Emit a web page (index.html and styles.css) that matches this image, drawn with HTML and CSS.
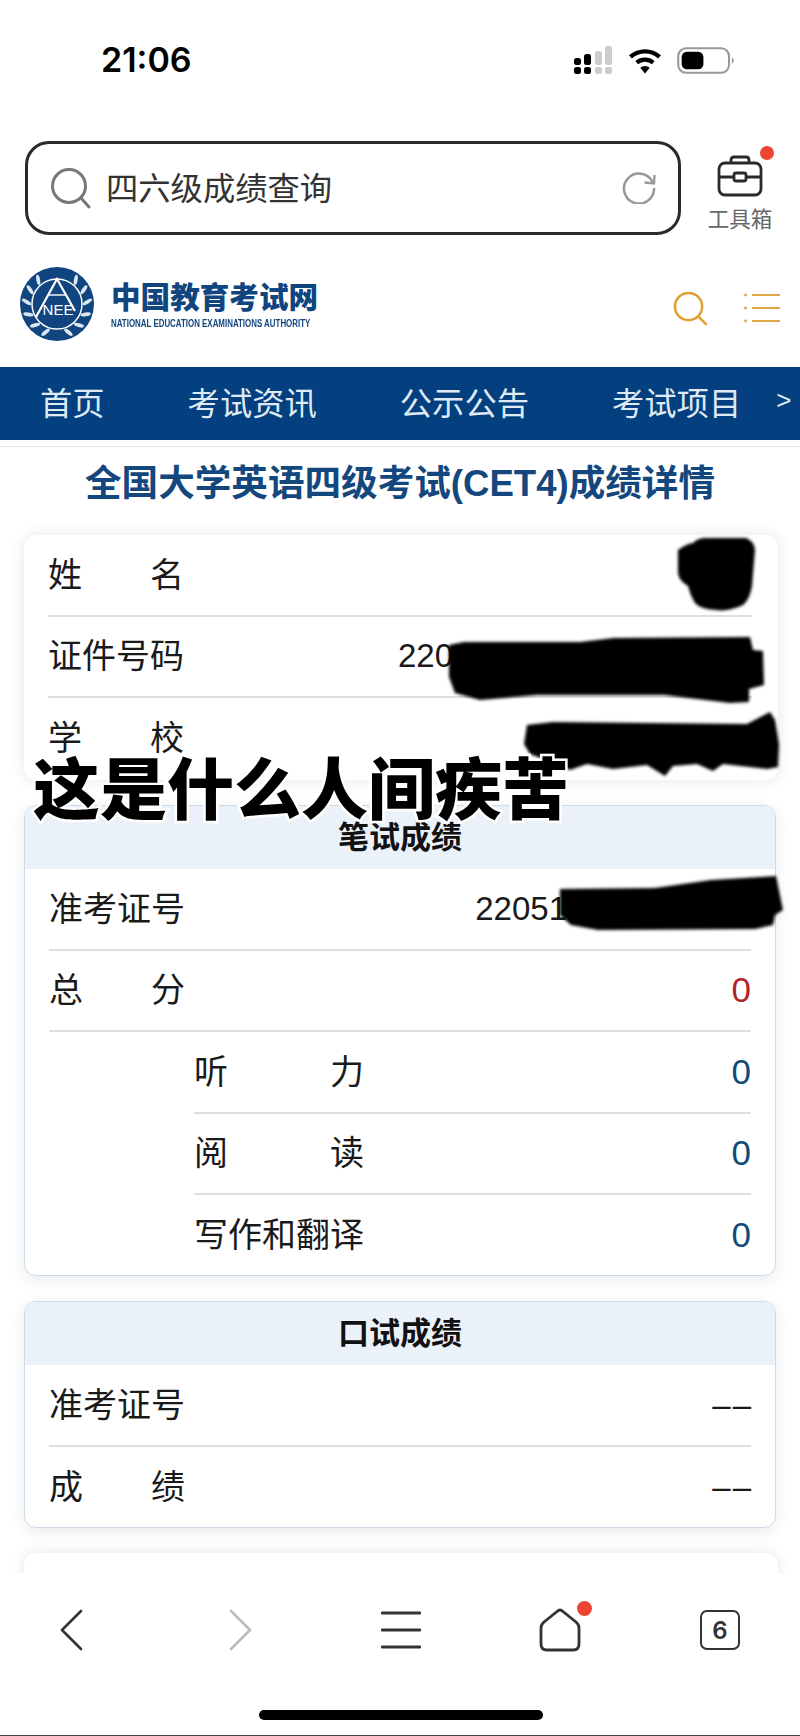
FILE: index.html
```html
<!DOCTYPE html>
<html lang="zh-CN">

<head>
    <meta charset="UTF-8">
    <meta name="viewport" content="width=device-width, initial-scale=1.0">
    <title>成绩详情</title>
    <link rel="stylesheet" href="styles.css">
</head>

<body>
    <div class="phone">
        <div class="status-bar">
            <div class="status-time">21:06</div>
            <div class="status-icons">
                <svg class="icon-signal" viewBox="0 0 40 28">
                    <rect x="1" y="12" width="7" height="7" rx="2.5" />
                    <rect x="1" y="21" width="7" height="7" rx="2.5" />
                    <rect x="11" y="8" width="7" height="11" rx="2.5" />
                    <rect x="11" y="21" width="7" height="7" rx="2.5" />
                    <rect class="off" x="22" y="5" width="7" height="14" rx="2.5" />
                    <rect class="off" x="22" y="21" width="7" height="7" rx="2.5" />
                    <rect class="off" x="32" y="0" width="7" height="19" rx="2.5" />
                    <rect class="off" x="32" y="21" width="7" height="7" rx="2.5" />
                </svg>
                <svg class="icon-wifi" viewBox="0 0 32 26">
                    <path d="M2 9.5 A21 21 0 0 1 30 9.5" fill="none" stroke="#000" stroke-width="4.2" />
                    <path d="M8 15 A12.5 12.5 0 0 1 24 15" fill="none" stroke="#000" stroke-width="4" />
                    <path d="M11.5 20 L16 25.5 L20.5 20 A7 7 0 0 0 11.5 20 Z" fill="#000" />
                </svg>
                <svg class="icon-battery" viewBox="0 0 56 26">
                    <rect x="1.2" y="1.2" width="49" height="23.6" rx="7.5" fill="none" stroke="#999" stroke-width="2" />
                    <rect x="4.5" y="4.5" width="21" height="17" rx="5" fill="#000" />
                    <path d="M53 10 C55 11 55.5 15 53 16 Z" fill="#999" />
                </svg>
            </div>
        </div>

        <div class="search-row">
            <div class="search-box">
                <svg class="icon-search" viewBox="0 0 42 42">
                    <circle cx="19" cy="19" r="16.5" fill="none" stroke="#777" stroke-width="3" />
                    <path d="M31 31 L39 40" stroke="#777" stroke-width="3" stroke-linecap="round" />
                </svg>
                <span class="search-text">四六级成绩查询</span>
                <svg class="icon-refresh" viewBox="0 0 34 34">
                    <path d="M30.5 12 A15 15 0 1 0 32 18" fill="none" stroke="#999" stroke-width="2.6" />
                    <path d="M22.5 12.5 L32 13.5 L32.5 5" fill="none" stroke="#999" stroke-width="2.4" />
                </svg>
            </div>
            <div class="toolbox">
                <span class="toolbox-dot"></span>
                <svg class="icon-toolbox" viewBox="0 0 46 42">
                    <rect x="2" y="8" width="42" height="32" rx="6" fill="none" stroke="#2a2a2a" stroke-width="2.8" />
                    <path d="M14 8 V5 Q14 2 17 2 H29 Q32 2 32 5 V8" fill="none" stroke="#2a2a2a" stroke-width="2.8" />
                    <path d="M2 22 H17 M29 22 H44" stroke="#2a2a2a" stroke-width="2.8" />
                    <rect x="17" y="18" width="12" height="8" rx="2" fill="none" stroke="#2a2a2a" stroke-width="2.8" />
                </svg>
                <span class="toolbox-label">工具箱</span>
            </div>
        </div>

        <div class="site-header">
            <svg class="site-logo" viewBox="0 0 74 74">
                <defs>
                    <ellipse id="leaf" cx="37" cy="6.5" rx="1.9" ry="5.2" fill="#dbe6f0" />
                </defs>
                <circle cx="37" cy="37" r="37" fill="#11457f" />
                <circle cx="37" cy="37" r="25" fill="none" stroke="#fff" stroke-width="1.5" />
                <!-- wreath: leaves lean in towards the top on both sides -->
                <use href="#leaf" transform="rotate(38 37 37) rotate(-28 37 6.5)" />
                <use href="#leaf" transform="rotate(62 37 37) rotate(-28 37 6.5)" />
                <use href="#leaf" transform="rotate(86 37 37) rotate(-28 37 6.5)" />
                <use href="#leaf" transform="rotate(110 37 37) rotate(-28 37 6.5)" />
                <use href="#leaf" transform="rotate(134 37 37) rotate(-28 37 6.5)" />
                <use href="#leaf" transform="rotate(158 37 37) rotate(-28 37 6.5)" />
                <use href="#leaf" transform="rotate(-38 37 37) rotate(28 37 6.5)" />
                <use href="#leaf" transform="rotate(-62 37 37) rotate(28 37 6.5)" />
                <use href="#leaf" transform="rotate(-86 37 37) rotate(28 37 6.5)" />
                <use href="#leaf" transform="rotate(-110 37 37) rotate(28 37 6.5)" />
                <use href="#leaf" transform="rotate(-134 37 37) rotate(28 37 6.5)" />
                <use href="#leaf" transform="rotate(-158 37 37) rotate(28 37 6.5)" />
                <path d="M16 50 L37 12 L55 44" fill="none" stroke="#fff" stroke-width="2.2" />
                <path d="M29 28 H45" stroke="#fff" stroke-width="1.4" />
                <text class="logo-letters" x="38" y="48" text-anchor="middle">NEE</text>
            </svg>
            <div class="site-name">
                <div class="site-name-cn">中国教育考试网</div>
                <div class="site-name-en">NATIONAL EDUCATION EXAMINATIONS AUTHORITY</div>
            </div>
            <svg class="icon-find" viewBox="0 0 36 36">
                <circle cx="16" cy="16" r="14" fill="none" stroke="#e0a030" stroke-width="2.6" />
                <path d="M26 26 L34 34" stroke="#e0a030" stroke-width="2.6" stroke-linecap="round" />
            </svg>
            <svg class="icon-list" viewBox="0 0 36 30">
                <path d="M8 2 H36 M8 15 H36 M8 28 H36" stroke="#e0a84a" stroke-width="2.2" />
                <circle cx="1.5" cy="2" r="1.4" fill="#e0a84a" />
                <circle cx="1.5" cy="15" r="1.4" fill="#e0a84a" />
                <circle cx="1.5" cy="28" r="1.4" fill="#e0a84a" />
            </svg>
        </div>

        <nav class="main-nav">
            <span>首页</span>
            <span class="nav-link">考试资讯</span>
            <span class="nav-link">公示公告</span>
            <span class="nav-link">考试项目</span>
            <span class="nav-more">&gt;</span>
        </nav>
        <div class="nav-shade"></div>

        <main class="content">
            <h1 class="page-title">全国大学英语四级考试(CET4)成绩详情</h1>

            <section class="card card-plain">
                <div class="row">
                    <span class="label">姓名</span>
                </div>
                <div class="row">
                    <span class="label">证件号码</span>
                    <span class="value value-id">220</span>
                </div>
                <div class="row">
                    <span class="label">学校</span>
                </div>
                <!-- inked over by hand -->
                <svg class="scribble scribble-name" viewBox="0 0 78 74">
                    <path d="M0 13 Q8 7 15 6 Q20 1 27 1 L68 1 Q76 4 77 13 L74 49 Q72 62 65 68 Q50 75 38 73 Q22 72 17 66 Q12 58 10 49 Q1 44 0 36 Z" />
                </svg>
                <svg class="scribble scribble-id" viewBox="0 0 318 67">
                    <path d="M2 8 L17 5 L133 5 L167 1 L303 0 L306 13 L316 14 L317 48 L302 52 L302 65 L283 66 L217 58 L90 58 L33 63 L8 56 L2 40 Z" />
                </svg>
                <svg class="scribble scribble-school" viewBox="0 0 256 65">
                    <path d="M3 13 L29 10 L223 12 L246 0 L251 8 L255 32 L254 55 L243 57 L199 52 L189 59 L173 52 L149 54 L141 64 L123 53 L89 57 L63 52 L46 58 L6 42 L0 32 Z" />
                </svg>
            </section>

            <section class="card card-score">
                <h2 class="card-head">笔试成绩</h2>
                <div class="row">
                    <span class="label">准考证号</span>
                    <span class="value value-ticket">22051</span>
                </div>
                <div class="row">
                    <span class="label">总分</span>
                    <span class="value value-total">0</span>
                </div>
                <div class="row row-sub">
                    <span class="label label-sub">听力</span>
                    <span class="value value-part">0</span>
                </div>
                <div class="row row-sub">
                    <span class="label label-sub">阅读</span>
                    <span class="value value-part">0</span>
                </div>
                <div class="row row-sub">
                    <span class="label label-sub">写作和翻译</span>
                    <span class="value value-part">0</span>
                </div>
                <svg class="scribble scribble-ticket" viewBox="0 0 226 55">
                    <path d="M2 13 L97 12 L153 4 L218 0 L225 34 L217 39 L215 49 L197 53 L40 54 L13 49 L2 39 Z" />
                </svg>
            </section>

            <section class="card card-score">
                <h2 class="card-head">口试成绩</h2>
                <div class="row">
                    <span class="label">准考证号</span>
                    <span class="value value-dash">––</span>
                </div>
                <div class="row">
                    <span class="label">成绩</span>
                    <span class="value value-dash">––</span>
                </div>
            </section>

            <section class="card card-plain"></section>

            <div class="caption">这是什么人间疾苦</div>
        </main>

        <div class="browser-bar">
            <div class="browser-icons">
                <svg class="icon-back" viewBox="0 0 24 42">
                    <path d="M22 2 L3 21 L22 40" fill="none" stroke="#333" stroke-width="2.6" stroke-linecap="round" stroke-linejoin="round" />
                </svg>
                <svg class="icon-forward" viewBox="0 0 24 42">
                    <path d="M2 2 L21 21 L2 40" fill="none" stroke="#bbb" stroke-width="2.6" stroke-linecap="round" stroke-linejoin="round" />
                </svg>
                <svg class="icon-menu" viewBox="0 0 40 38">
                    <path d="M1 2 H39 M1 19 H39 M1 36 H39" stroke="#333" stroke-width="2.8" stroke-linecap="round" />
                </svg>
                <div class="home-wrap">
                    <svg class="icon-home" viewBox="0 0 42 44">
                        <path d="M21 2 Q22.5 2 24 3.5 L37 14 Q40 16.5 40 20 V36 Q40 42 34 42 H8 Q2 42 2 36 V20 Q2 16.5 5 14 L18 3.5 Q19.5 2 21 2 Z" fill="none" stroke="#333" stroke-width="2.8" />
                    </svg>
                    <span class="home-dot"></span>
                </div>
                <div class="tab-count">6</div>
            </div>
            <div class="home-bar"></div>
        </div>
    </div>
</body>

</html>
```
FILE: styles.css
```css
* {
    box-sizing: border-box;
}

body {
    margin: 0;
    background-color: #fff;
    font-family: "Liberation Sans", "Noto Sans CJK SC", sans-serif;
    color: #1a1a1a;
}

.phone {
    width: 800px;
    height: 1736px;
    display: flex;
    flex-direction: column;
    overflow: hidden;
}

/* status bar */
.status-bar {
    height: 141px;
    flex-shrink: 0;
    display: flex;
    justify-content: space-between;
    align-items: flex-start;
    padding: 40px 65px 0 101px;
}

.status-time {
    font-family: Inter, sans-serif;
    font-size: 34px;
    font-weight: 600;
    line-height: 40px;
    color: #000;
}

.status-icons {
    display: flex;
    align-items: center;
    gap: 15px;
    padding-top: 6px;
}

.icon-signal {
    width: 40px;
    height: 28px;
    fill: #000;
}

.icon-signal .off {
    fill: #ccc;
}

.icon-wifi {
    width: 34px;
    height: 27px;
}

.icon-battery {
    width: 58px;
    height: 27px;
}

/* search row */
.search-row {
    height: 126px;
    flex-shrink: 0;
    display: flex;
    align-items: flex-start;
    padding-left: 25px;
}

.search-box {
    width: 656px;
    height: 94px;
    border: 3px solid #2a2a2a;
    border-radius: 24px;
    display: flex;
    align-items: center;
    padding: 0 22px;
}

.icon-search {
    width: 42px;
    height: 42px;
    margin-right: 14px;
    flex-shrink: 0;
}

.search-text {
    font-size: 32.3px;
    color: #333;
    flex: 1;
    padding-bottom: 4px;
}

.icon-refresh {
    width: 34px;
    height: 34px;
    margin-bottom: 2px;
}

.toolbox {
    position: relative;
    width: 66px;
    margin-left: 26px;
    padding-top: 14px;
    display: flex;
    flex-direction: column;
    align-items: center;
}

.toolbox-dot {
    position: absolute;
    top: 5px;
    right: -1px;
    width: 14px;
    height: 14px;
    border-radius: 50%;
    background-color: #ee4433;
}

.icon-toolbox {
    width: 46px;
    height: 42px;
}

.toolbox-label {
    font-size: 21.5px;
    line-height: 26px;
    margin-top: 10px;
    color: #666;
    white-space: nowrap;
}

/* site header */
.site-header {
    height: 100px;
    flex-shrink: 0;
    display: flex;
    align-items: flex-start;
    padding-left: 20px;
}

.site-logo {
    width: 74px;
    height: 74px;
    flex-shrink: 0;
}

.logo-letters {
    font-family: "Liberation Sans", sans-serif;
    font-size: 15px;
    fill: #fff;
}

.site-name {
    width: 210px;
    margin-left: 17px;
    padding-top: 14px;
    color: #11457f;
}

.site-name-cn {
    font-size: 29.6px;
    font-weight: 900;
    line-height: 34px;
    white-space: nowrap;
}

.site-name-en {
    font-size: 11px;
    font-weight: bold;
    line-height: 12px;
    margin-top: 2px;
    white-space: nowrap;
    transform: scaleX(0.72);
    transform-origin: left center;
}

.icon-find {
    width: 35px;
    height: 35px;
    margin-top: 24px;
    margin-left: 352px;
}

.icon-list {
    width: 36px;
    height: 30px;
    margin-top: 26px;
    margin-left: 36px;
}

/* main nav */
.main-nav {
    height: 73px;
    flex-shrink: 0;
    background-color: #04407f;
    color: #dfeaf4;
    display: flex;
    align-items: center;
    font-size: 32.3px;
    white-space: nowrap;
    padding: 0 0 6px 40px;
}

.nav-link {
    margin-left: 83px;
}

.nav-more {
    font-size: 26px;
    margin-left: 35px;
}

.nav-shade {
    height: 7px;
    flex-shrink: 0;
    border-bottom: 1px solid #e6eaee;
}

/* cards */
.content {
    position: relative;
    flex: 1;
    overflow: hidden;
    padding: 0 24px;
}

.page-title {
    margin: 0;
    height: 88px;
    padding-top: 12px;
    font-size: 36.6px;
    line-height: 50px;
    font-weight: bold;
    text-align: center;
    color: #13477d;
    white-space: nowrap;
}

.card {
    position: relative;
    border-radius: 12px;
    background-color: #fff;
}

.card-plain {
    width: 754px;
    height: 245px;
    margin-bottom: 25px;
    padding: 0 26px 0 24px;
    box-shadow: 0 0 14px rgba(60, 80, 110, 0.14);
}

.card-score {
    width: 752px;
    margin-bottom: 25px;
    border: 1.5px solid #cddae6;
    box-shadow: 0 4px 14px rgba(60, 80, 110, 0.12);
    padding: 0 24px;
}

.card-head {
    margin: 0 -24px;
    height: 63px;
    border-radius: 10px 10px 0 0;
    background-color: #ebf1f9;
    font-size: 31px;
    line-height: 63px;
    font-weight: bold;
    text-align: center;
    color: #111;
}

.row {
    height: 81.5px;
    display: flex;
    justify-content: space-between;
    align-items: center;
    border-bottom: 2px solid #dcdfe2;
    font-size: 34px;
}

.row:last-of-type {
    height: 80px;
    border-bottom: none;
}

.row-sub {
    margin-left: 145px;
}

.label {
    width: 4em;
    text-align-last: justify;
    line-height: 44px;
}

.label-sub {
    width: 5em;
}

.value {
    font-size: 33px;
    line-height: 44px;
    color: #1a1a1a;
}

/* the rest of these two numbers runs under the ink */
.value-id {
    margin-right: 299px;
}

.value-ticket {
    margin-right: 184px;
}

.value-total {
    font-size: 35px;
    color: #b5232b;
}

.value-part {
    font-size: 35px;
    color: #104a78;
}

.value-dash {
    letter-spacing: 2px;
    margin-right: -2px;
}

/* marker ink drawn on top of the rows */
.scribble {
    position: absolute;
    fill: #000;
    filter: blur(1.5px);
}

.scribble-name {
    top: 2px;
    left: 654px;
    width: 78px;
    height: 74px;
}

.scribble-id {
    top: 102px;
    left: 423px;
    width: 318px;
    height: 67px;
}

.scribble-school {
    top: 177px;
    left: 500px;
    width: 256px;
    height: 65px;
}

.scribble-ticket {
    top: 70px;
    left: 533px;
    width: 226px;
    height: 55px;
}

.caption {
    position: absolute;
    top: 304px;
    left: 33px;
    font-size: 67px;
    font-weight: 900;
    line-height: 80px;
    color: #000;
    white-space: nowrap;
    -webkit-text-stroke: 5px #fff;
    paint-order: stroke fill;
}

/* browser toolbar */
.browser-bar {
    height: 163px;
    flex-shrink: 0;
    background-color: #fff;
    border-bottom: 1px solid #444;
    position: relative;
}

.browser-icons {
    display: flex;
    align-items: center;
    height: 42px;
    margin-top: 36px;
    padding-left: 59px;
}

.icon-back,
.icon-forward {
    width: 24px;
    height: 42px;
}

.icon-forward {
    margin-left: 146px;
}

.icon-menu {
    width: 40px;
    height: 38px;
    margin-left: 128px;
}

.home-wrap {
    position: relative;
    width: 42px;
    height: 44px;
    margin-left: 118px;
}

.icon-home {
    width: 42px;
    height: 44px;
}

.home-dot {
    position: absolute;
    top: -7px;
    right: -11px;
    width: 15px;
    height: 15px;
    border-radius: 50%;
    background-color: #ee4433;
}

.tab-count {
    width: 40px;
    height: 40px;
    margin-left: 119px;
    border: 2.8px solid #333;
    border-radius: 7px;
    display: flex;
    align-items: center;
    justify-content: center;
    font-family: Inter, sans-serif;
    font-size: 24px;
    font-weight: 600;
    color: #333;
}

.home-bar {
    position: absolute;
    left: 259px;
    bottom: 15px;
    width: 284px;
    height: 10px;
    border-radius: 5px;
    background-color: #000;
}
```
